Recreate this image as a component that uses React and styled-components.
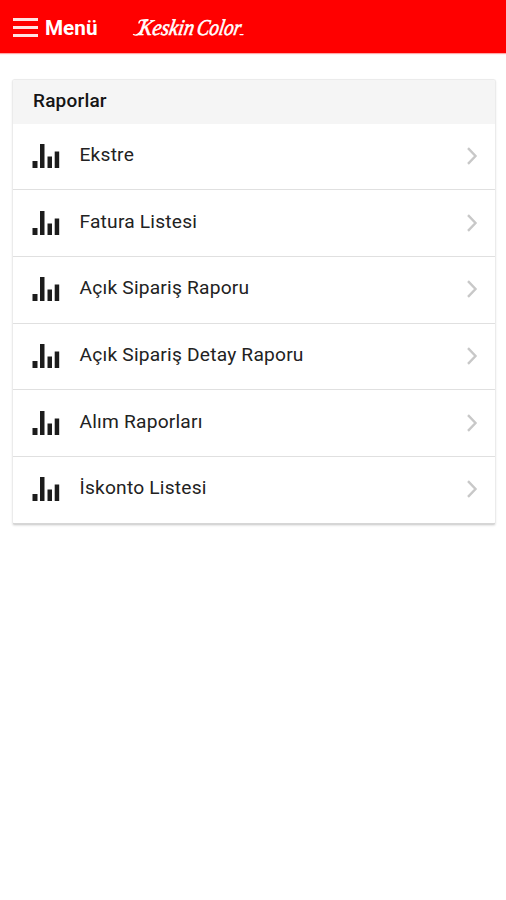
import styled, { createGlobalStyle } from "styled-components";

const reports = [
  { id: 1, title: "Ekstre" },
  { id: 2, title: "Fatura Listesi" },
  { id: 3, title: "Açık Sipariş Raporu" },
  { id: 4, title: "Açık Sipariş Detay Raporu" },
  { id: 5, title: "Alım Raporları" },
  { id: 6, title: "İskonto Listesi" },
];

export default function App() {
  return (
    <Page>
      <GlobalStyle />
      <Header>
        <MenuButton type="button">
          <MenuIcon>
            <span />
            <span />
            <span />
          </MenuIcon>
          Menü
        </MenuButton>
        <Logo />
      </Header>

      <Card>
        <CardTitle>Raporlar</CardTitle>
        {reports.map((report) => (
          <Row key={report.id}>
            <ChartIcon />
            <RowLabel>{report.title}</RowLabel>
            <Chevron />
          </Row>
        ))}
      </Card>
    </Page>
  );
}

function Logo() {
  return (
    <LogoSvg width="124" height="34" viewBox="0 -4 124 34">
      {/* swash in front of the K and the tail after the r */}
      <path
        d="M7 8c0-3 4-3.5 9-3.300M1.500 19.500c2.500 1.500 5.500-.5 7.500-3.500M108 19.600h3"
        fill="none"
        stroke="#fff"
        strokeWidth="1.400"
        strokeLinecap="round"
      />
      <g transform="translate(0 20) skewX(-10)">
        <text x="6" y="0" textLength="55" lengthAdjust="spacingAndGlyphs">
          Keskin
        </text>
        <text x="64" y="0" textLength="44" lengthAdjust="spacingAndGlyphs">
          Color
        </text>
      </g>
    </LogoSvg>
  );
}

function ChartIcon() {
  return (
    <ChartSvg width="28" height="26" viewBox="0 0 28 26" fill="#1c1c1c">
      <rect x="0.5" y="18" width="5" height="7" />
      <rect x="8" y="1" width="4.5" height="24" />
      <rect x="15.5" y="13.5" width="4.5" height="11.5" />
      <rect x="22.7" y="8.5" width="4.5" height="16.5" />
    </ChartSvg>
  );
}

function Chevron() {
  return (
    <ChevronSvg width="12" height="20" viewBox="0 0 12 20" fill="none">
      <path d="M2 2.2L9.5 10L2 17.8" stroke="#c8c8c8" strokeWidth="2.4" />
    </ChevronSvg>
  );
}

const GlobalStyle = createGlobalStyle`
  * {
    box-sizing: border-box;
  }
  body {
    margin: 0;
    background-color: #fff;
    font-family: Roboto, "Liberation Sans", sans-serif;
  }
`;

const Page = styled.div`
  min-height: 100vh;
  display: flex;
  flex-direction: column;
  background-color: #fff;
`;

const Header = styled.header`
  height: 53px;
  display: flex;
  align-items: center;
  background-color: #ff0000;
  box-shadow: 0 1px 1px rgba(255, 0, 0, 0.35);
`;

const MenuButton = styled.button`
  width: 132px;
  height: 53px;
  padding: 2px 0 0 13px;
  display: flex;
  align-items: center;
  border: none;
  background: none;
  color: #fff;
  font-family: inherit;
  font-size: 20.7px;
  font-weight: 700;
`;

const MenuIcon = styled.span`
  width: 25px;
  height: 19px;
  margin-right: 7px;
  display: flex;
  flex-direction: column;
  justify-content: space-between;
  span {
    height: 3px;
    background-color: #ffe3e3;
  }
`;

const LogoSvg = styled.svg`
  margin-top: 3px;
  overflow: visible;
  text {
    font-family: "Liberation Serif", serif;
    font-size: 22.5px;
    font-style: italic;
    fill: #fff;
    stroke: #fff;
    stroke-width: 0.6px;
  }
`;

const Card = styled.main`
  margin: 26px 10px 0 12px;
  border: 1px solid #ebebeb;
  border-bottom: 2px solid #d6d6d6;
  border-radius: 3px;
  overflow: hidden;
  box-shadow: 0 1px 2px rgba(0, 0, 0, 0.1);
`;

const CardTitle = styled.h1`
  height: 43.5px;
  margin: 0;
  padding: 0 20px;
  background-color: #f5f5f5;
  color: #151515;
  font-size: 19px;
  font-weight: 500;
  line-height: 41px;
  letter-spacing: 0.2px;
`;

const Row = styled.div`
  height: 66.7px;
  padding: 0 17px 1px 19px;
  display: flex;
  align-items: center;
  border-bottom: 1px solid #e0e0e0;
  background-color: #fff;
  &:last-child {
    height: 66px;
    border-bottom: none;
  }
`;

const ChartSvg = styled.svg`
  margin-right: 19.5px;
`;

const ChevronSvg = styled.svg`
  flex-shrink: 0;
`;

const RowLabel = styled.span`
  flex: 1;
  margin-bottom: 3px;
  color: #222;
  font-size: 19.2px;
  font-weight: 400;
  letter-spacing: 0.2px;
`;
